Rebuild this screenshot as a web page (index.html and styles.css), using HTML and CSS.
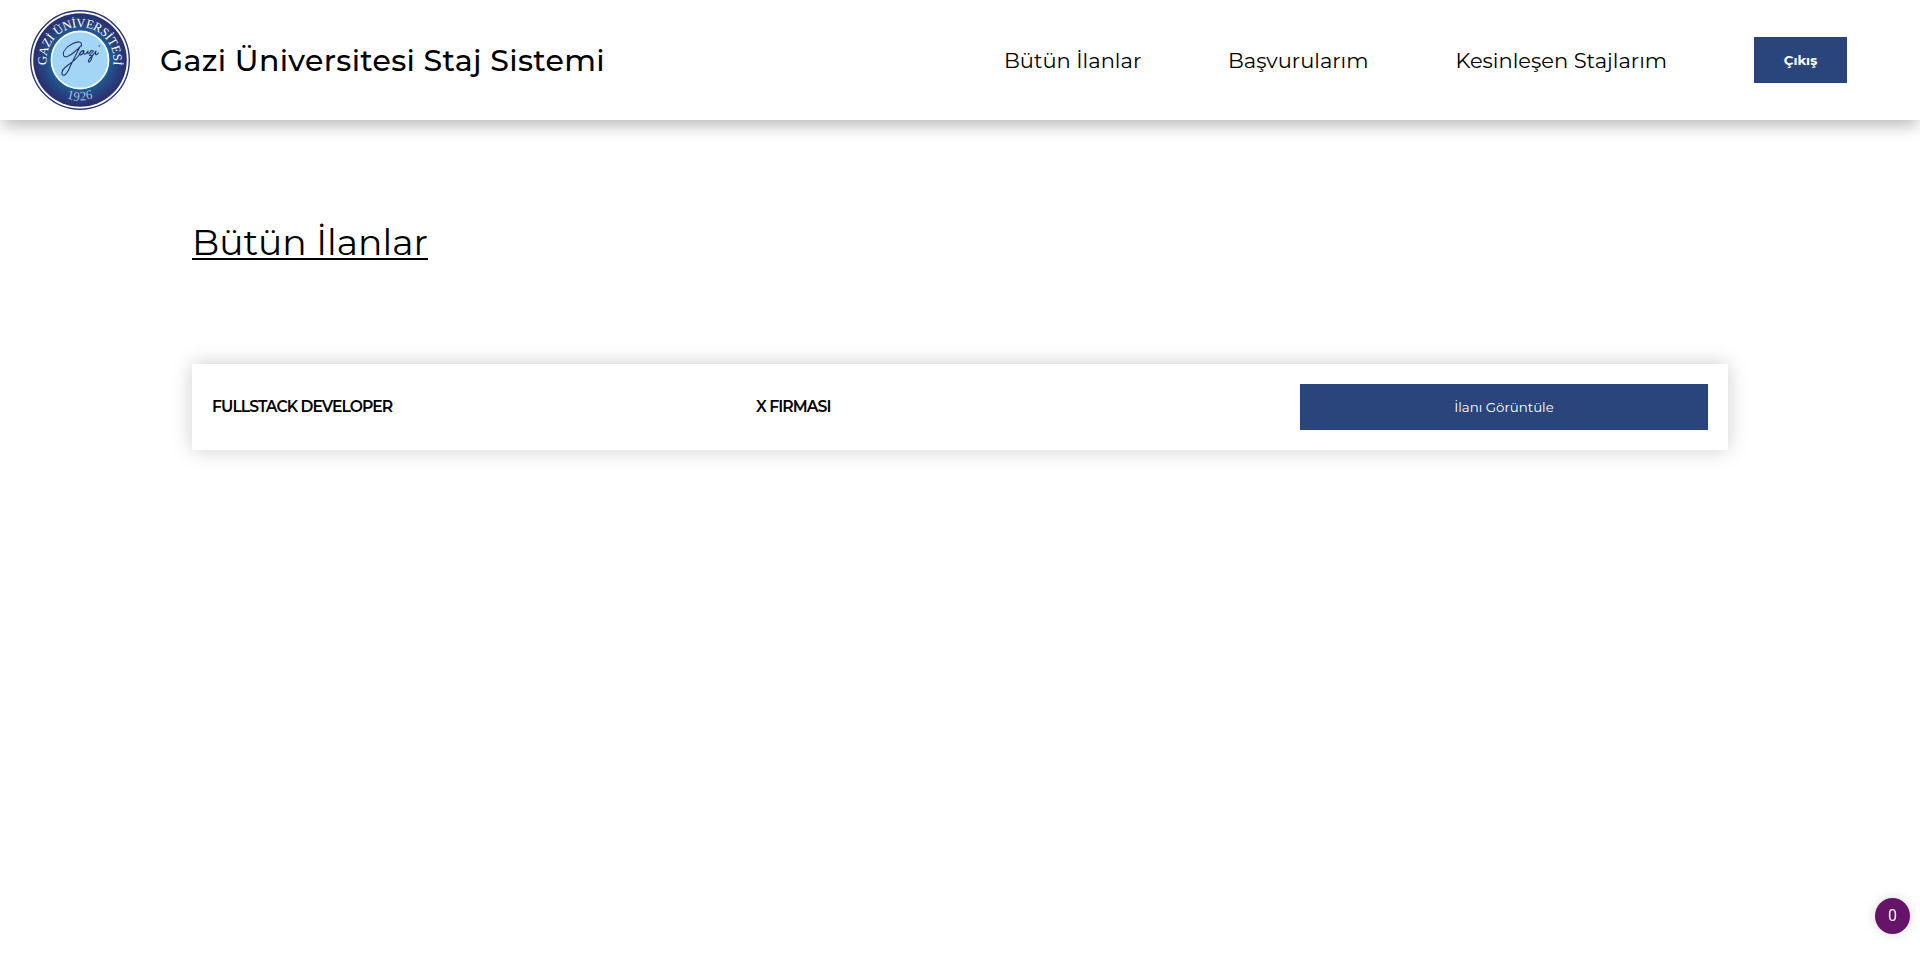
FILE: index.html
```html
<!DOCTYPE html>
<html lang="tr">
<head>
<meta charset="utf-8">
<title>Gazi Üniversitesi Staj Sistemi</title>
<link rel="stylesheet" href="styles.css">
</head>
<body>
<header class="header">
  <svg class="logo" viewBox="0 0 100 100" role="img" aria-label="Gazi Üniversitesi">
    <defs>
      <radialGradient id="ring" gradientUnits="userSpaceOnUse" cx="50" cy="50" r="46">
        <stop offset="0.6" stop-color="#1c6299"/>
        <stop offset="0.78" stop-color="#254783"/>
        <stop offset="1" stop-color="#2b2f70"/>
      </radialGradient>
      <path id="arc-top" d="M16.8 55 A33.5 33.5 0 1 1 83.2 55"/>
    </defs>
    <circle cx="50" cy="50" r="49.3" fill="#fff" stroke="#2b3a78" stroke-width="1.4"/>
    <circle cx="50" cy="50" r="46.8" fill="url(#ring)"/>
    <circle cx="50" cy="50" r="28.6" fill="#a3d5f5" stroke="#fff" stroke-width="1.6"/>
    <text class="logo-name"><textPath href="#arc-top" textLength="114" startOffset="0">GAZİ ÜNİVERSİTESİ</textPath></text>
    <text class="logo-year" x="36.5 43 50 56.5" y="88.5 90.5 90.5 89.5" rotate="12 5 -3 -9">1926</text>
    <path class="signature" d="M51.5 36 C52 31 48 31 43 33.5 C37 36.5 33 41 33.3 44.5 C34 49.5 41 45 45 41.5 C47.5 39.5 50 36.7 50.5 36 C47 42 45 47 41.7 53.3 C39 59 37 65 34 65.3 C31 65.5 31 61 35 57.5 C40 53.5 46 50 49 45 C50 41.5 53 39.5 54 41 C53 44.5 49.5 46.5 50 43.5 C51 41 54 40 54 41 C53 46 56 44.5 58 41 C57 45.5 59.5 44 61 40.5 L63.5 41 L59.5 45.5 C63 44.5 62.5 47.5 61 50 C59 53.5 57.5 52 59 49.5 C61 46.5 64 45 66 41 C64.5 45.5 66.5 45.5 68.5 43 M69 36 L69.8 35.8"/>
  </svg>
  <h1 class="title">Gazi Üniversitesi Staj Sistemi</h1>
  <nav class="nav">
    <a class="nav-link nav-all">Bütün İlanlar</a>
    <a class="nav-link nav-applications">Başvurularım</a>
    <a class="nav-link nav-final">Kesinleşen Stajlarım</a>
    <button class="button logout"><span>Çıkış</span></button>
  </nav>
</header>
<main class="content">
  <h2 class="heading">Bütün İlanlar</h2>
  <section class="card">
    <div class="position">FULLSTACK DEVELOPER</div>
    <div class="company">X FIRMASI</div>
    <button class="button view"><span>İlanı Görüntüle</span></button>
  </section>
</main>
<div class="badge">0</div>
</body>
</html>
```
FILE: styles.css
```css
* { box-sizing: border-box; }
body {
  margin: 0;
  min-height: 100vh;
  background: #fff;
  color: #000;
  font-family: Montserrat, Inter, "Open Sans", sans-serif;
}
.header {
  display: flex;
  align-items: center;
  height: 120px;
  padding: 0 73px 0 30px;
  box-shadow: 0 8px 14px -2px rgba(0, 0, 0, .26);
}
.logo { flex: none; width: 100px; height: 100px; }
.logo-name {
  font: 12.5px "Liberation Serif", serif;
  fill: #fff;
}
.logo-year {
  font: 13px "Liberation Serif", serif;
  fill: #a9bfe0;
}
.signature {
  fill: none;
  stroke: #24346f;
  stroke-width: 1.1;
  stroke-linecap: round;
  stroke-linejoin: round;
}
.title {
  margin: 2px 0 0 30px;
  font-size: 30px;
  font-weight: 500;
  line-height: 40px;
  letter-spacing: .33px;
  white-space: nowrap;
}
.nav {
  display: flex;
  align-items: center;
  margin-left: auto;
}
.nav-link {
  padding-top: 2px;
  font-size: 21px;
  font-weight: 400;
  line-height: 30px;
  white-space: nowrap;
}
.nav-all { width: 224px; }
.nav-applications { width: 227.5px; }
.nav-final { width: 298.5px; }
.button {
  display: flex;
  align-items: center;
  justify-content: center;
  height: 46px;
  padding: 0;
  border: 0;
  background: #29457b;
  color: #fff;
  font-family: inherit;
  font-size: 13.333px;
}
.logout { width: 93px; font-weight: 700; }
.content { padding: 100px 192px 60px; }
.heading {
  width: fit-content;
  margin: 0;
  font-size: 36.1px;
  font-weight: 400;
  line-height: 44px;
  text-decoration: underline;
  text-decoration-thickness: 2px;
  text-underline-offset: 3px;
  text-decoration-skip-ink: none;
}
.card {
  display: grid;
  grid-template-columns: repeat(3, 1fr);
  column-gap: 136px;
  align-items: center;
  height: 86px;
  margin-top: 100px;
  padding: 20px;
  box-shadow: 0 0 20px rgba(0, 0, 0, .2);
  font-size: 15.6px;
  font-weight: 600;
  letter-spacing: -.92px;
}
.position, .company { padding-bottom: 1px; }
.view { font-weight: 400; letter-spacing: 0; }
.badge {
  position: fixed;
  right: 10px;
  bottom: 32px;
  width: 35px;
  height: 36px;
  border-radius: 50%;
  background: #651468;
  box-shadow: 0 0 12px rgba(0, 0, 0, .15);
  color: #fff;
  font: 16px/35px Roboto, sans-serif;
  text-align: center;
}
```
